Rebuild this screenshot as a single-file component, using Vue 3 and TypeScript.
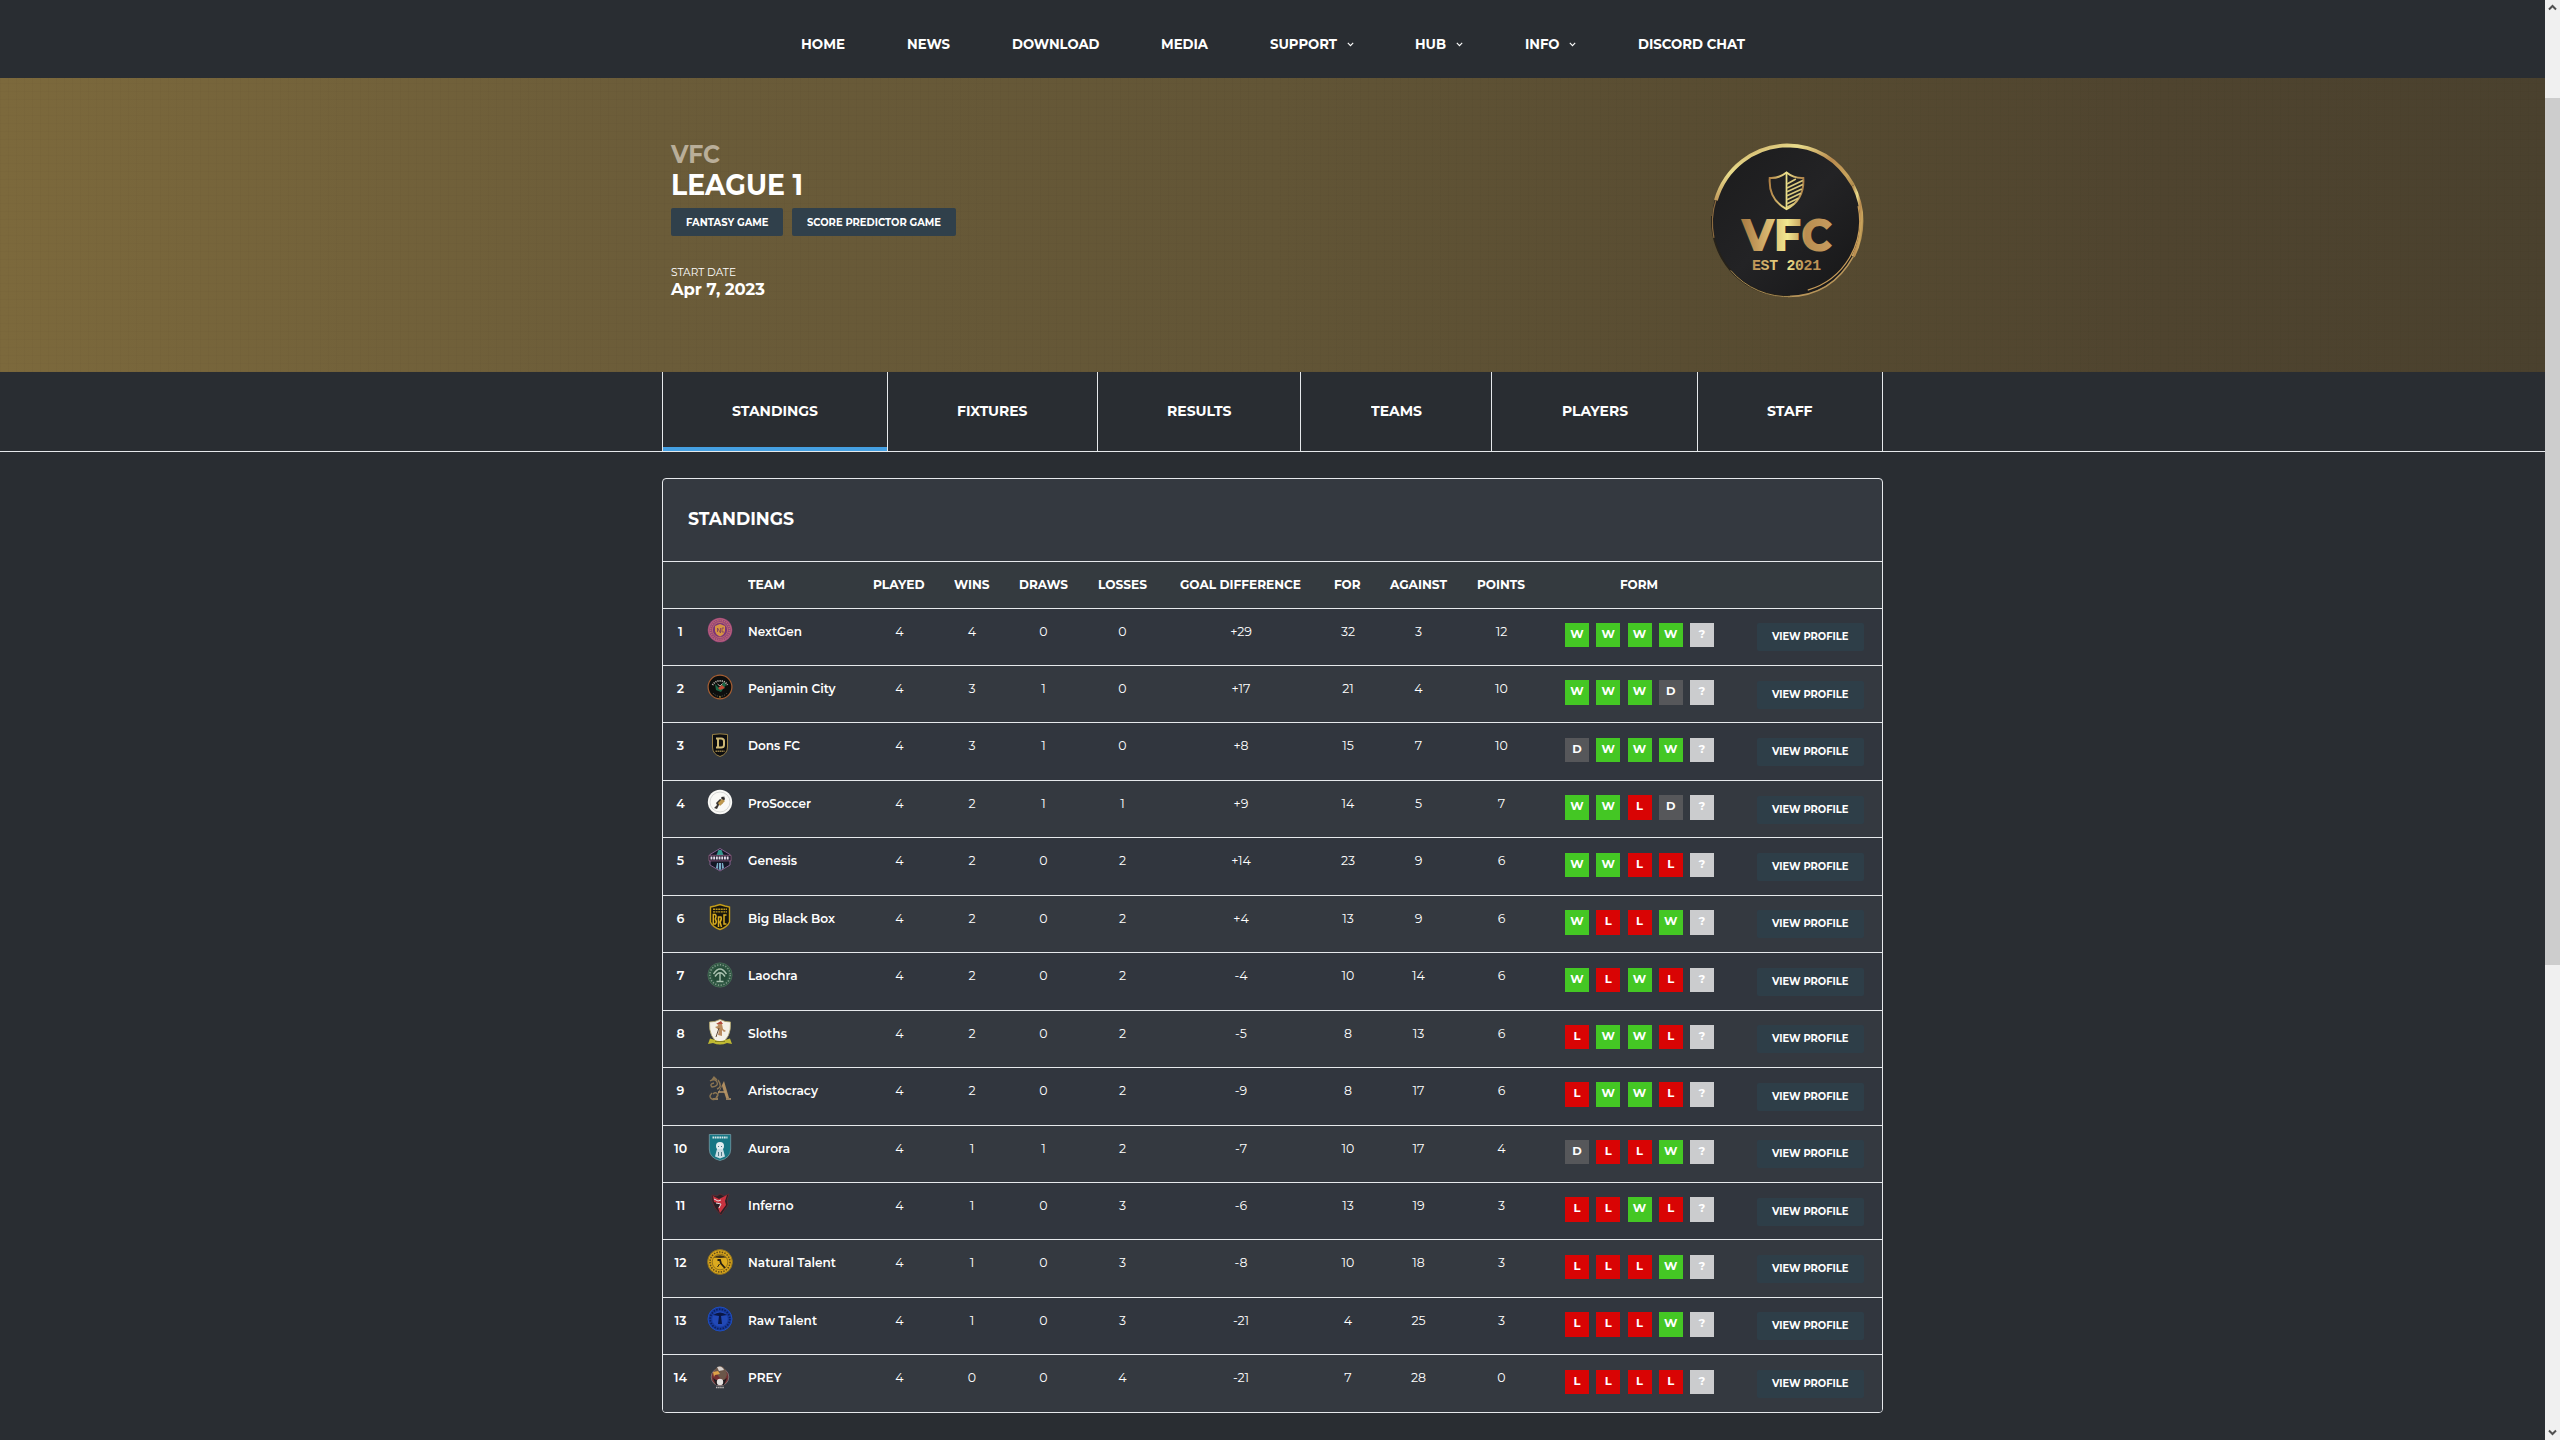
<script setup lang="ts">
interface MenuItem { label: string; width: number; gap: number; sub?: boolean }
interface Column { label: string; width: number }
interface Team { name: string; width: number; stats: (string | number)[]; form: string }

// Stretches a label horizontally so that it occupies the given width.
const vFit = {
  mounted(el: HTMLElement, binding: { value: number }) {
    const natural = el.getBoundingClientRect().width
    if (!natural || !binding.value) return
    el.style.width = `${binding.value}px`
    el.style.transform = `scaleX(${binding.value / natural})`
  },
}

const menu: MenuItem[] = [
  { label: 'HOME', width: 44, gap: 0 },
  { label: 'NEWS', width: 43, gap: 62 },
  { label: 'DOWNLOAD', width: 87.5, gap: 61.5 },
  { label: 'MEDIA', width: 47, gap: 62 },
  { label: 'SUPPORT', width: 67, gap: 61.5, sub: true },
  { label: 'HUB', width: 31, gap: 61.5, sub: true },
  { label: 'INFO', width: 34.5, gap: 61.5, sub: true },
  { label: 'DISCORD CHAT', width: 107, gap: 61.5 },
]

const tabs: Column[] = [
  { label: 'STANDINGS', width: 86 },
  { label: 'FIXTURES', width: 70.5 },
  { label: 'RESULTS', width: 64.5 },
  { label: 'TEAMS', width: 51 },
  { label: 'PLAYERS', width: 66 },
  { label: 'STAFF', width: 45.5 },
]

const columns: Column[] = [
  { label: 'PLAYED', width: 51.5 },
  { label: 'WINS', width: 35.5 },
  { label: 'DRAWS', width: 49 },
  { label: 'LOSSES', width: 49 },
  { label: 'GOAL DIFFERENCE', width: 121 },
  { label: 'FOR', width: 26.5 },
  { label: 'AGAINST', width: 57 },
  { label: 'POINTS', width: 48 },
  { label: 'FORM', width: 38 },
]

const teams: Team[] = [
  { name: 'NextGen', width: 54, stats: [4, 4, 0, 0, '+29', 32, 3, 12], form: 'WWWW?' },
  { name: 'Penjamin City', width: 87.5, stats: [4, 3, 1, 0, '+17', 21, 4, 10], form: 'WWWD?' },
  { name: 'Dons FC', width: 52, stats: [4, 3, 1, 0, '+8', 15, 7, 10], form: 'DWWW?' },
  { name: 'ProSoccer', width: 63, stats: [4, 2, 1, 1, '+9', 14, 5, 7], form: 'WWLD?' },
  { name: 'Genesis', width: 49, stats: [4, 2, 0, 2, '+14', 23, 9, 6], form: 'WWLL?' },
  { name: 'Big Black Box', width: 87, stats: [4, 2, 0, 2, '+4', 13, 9, 6], form: 'WLLW?' },
  { name: 'Laochra', width: 49.5, stats: [4, 2, 0, 2, '-4', 10, 14, 6], form: 'WLWL?' },
  { name: 'Sloths', width: 39, stats: [4, 2, 0, 2, '-5', 8, 13, 6], form: 'LWWL?' },
  { name: 'Aristocracy', width: 70, stats: [4, 2, 0, 2, '-9', 8, 17, 6], form: 'LWWL?' },
  { name: 'Aurora', width: 42, stats: [4, 1, 1, 2, '-7', 10, 17, 4], form: 'DLLW?' },
  { name: 'Inferno', width: 45.5, stats: [4, 1, 0, 3, '-6', 13, 19, 3], form: 'LLWL?' },
  { name: 'Natural Talent', width: 88, stats: [4, 1, 0, 3, '-8', 10, 18, 3], form: 'LLLW?' },
  { name: 'Raw Talent', width: 69, stats: [4, 1, 0, 3, '-21', 4, 25, 3], form: 'LLLW?' },
  { name: 'PREY', width: 33.5, stats: [4, 0, 0, 4, '-21', 7, 28, 0], form: 'LLLL?' },
]

const formClass: Record<string, string> = { W: 'win', D: 'draw', L: 'loss', '?': 'next' }
</script>

<template>
  <div class="window">
    <div class="page">
      <header class="header">
        <nav class="menu">
          <a v-for="m in menu" :key="m.label" class="menu-item" :style="{ marginLeft: m.gap + 'px' }">
            <span v-fit="m.width" class="fit">{{ m.label }}</span>
            <svg v-if="m.sub" class="caret" width="7" height="5" viewBox="0 0 7 5"><path d="M.8 .8 3.5 3.6 6.2 .8" fill="none" stroke="#fff" stroke-width="1.1" /></svg>
          </a>
        </nav>
      </header>

      <section class="banner">
        <div class="container banner-row">
          <div class="info">
            <div class="org"><span v-fit="49" class="fit">VFC</span></div>
            <div class="league"><span v-fit="132" class="fit">LEAGUE 1</span></div>
            <div class="actions">
              <a class="btn"><span v-fit="82.5" class="fit">FANTASY GAME</span></a>
              <a class="btn"><span v-fit="134" class="fit">SCORE PREDICTOR GAME</span></a>
            </div>
            <div class="date-label"><span v-fit="65" class="fit">START DATE</span></div>
            <div class="date"><span v-fit="94" class="fit">Apr 7, 2023</span></div>
          </div>
          <svg class="crest" width="158" height="158" viewBox="0 0 160 160">
            <defs>
              <linearGradient id="ring" x1="0" y1="0" x2="1" y2="1">
                <stop offset="0" stop-color="#b98f50" /><stop offset=".3" stop-color="#e9dc8c" /><stop offset=".55" stop-color="#b98a4e" /><stop offset=".75" stop-color="#c9a45c" /><stop offset="1" stop-color="#8f6d3c" />
              </linearGradient>
              <linearGradient id="gold" x1="0" x2="1">
                <stop offset="0" stop-color="#b08145" /><stop offset=".5" stop-color="#f0e48e" /><stop offset="1" stop-color="#ad8047" />
              </linearGradient>
              <linearGradient id="goldText" gradientUnits="userSpaceOnUse" x1="33" y1="0" x2="126" y2="0">
                <stop offset="0" stop-color="#a87a42" /><stop offset=".22" stop-color="#cda765" /><stop offset=".5" stop-color="#f2e890" /><stop offset=".7" stop-color="#b98d50" /><stop offset="1" stop-color="#c79d60" />
              </linearGradient>
              <linearGradient id="disc" x1="0" y1="0" x2="1" y2="1">
                <stop offset="0" stop-color="#1b1b1c" /><stop offset=".5" stop-color="#232325" /><stop offset="1" stop-color="#161617" />
              </linearGradient>
            </defs>
            <ellipse cx="79" cy="80.500" rx="76" ry="77" fill="url(#disc)" />
            <path d="M7 60A76 77 0 0 1 79 4.500Q123 5 146 45" fill="none" stroke="url(#ring)" stroke-width="3.800" />
            <path d="M146 45A77 78 0 0 1 146 117" fill="none" stroke="url(#ring)" stroke-width="3.400" />
            <path d="M146 117Q124 157 80 157.500" fill="none" stroke="#b8955a" stroke-width="1.600" />
            <path d="M151 66A73 73 0 0 1 100 151" fill="none" stroke="#c79c59" stroke-width="1.300" />
            <path d="M82 157A76 77 0 0 1 3 76" fill="none" stroke="#26221a" stroke-width="1.800" />
            <path d="M84 157.500A76 76 0 0 1 22 131" fill="none" stroke="#a98b52" stroke-width="1" />
            <path d="M7 60Q1 78 5 98" fill="none" stroke="#8b6a3f" stroke-width="1.200" />
            <path d="M78.500 32Q86 38 95.500 37.500Q97 59 78.500 69Q60 59 61.500 37.500Q71 38 78.500 32Z" fill="none" stroke="url(#gold)" stroke-width="2" />
            <path d="M78.500 32V69" stroke="#ebe08b" stroke-width="1.800" />
            <g stroke="#dccb7d" stroke-width="1.700">
              <path d="M79 43.500 88 38.500M79 47.500 95 40M79 51.500 95 44M79 55.500 94 48.500M79 59.500 93 53M79 63.500 90.500 58M79 67 86 63.500" />
            </g>
            <text x="33" y="111" class="crest-name" textLength="92" lengthAdjust="spacingAndGlyphs" fill="url(#goldText)">VFC</text>
            <text x="43.500" y="131" class="crest-est" textLength="70" lengthAdjust="spacing" fill="url(#goldText)">EST 2021</text>
          </svg>
        </div>
      </section>

      <div class="tabs">
        <div class="container tab-row">
          <a v-for="(t, i) in tabs" :key="t.label" class="tab" :class="{ active: i === 0 }"><span v-fit="t.width" class="fit">{{ t.label }}</span></a>
        </div>
      </div>

      <main class="container card">
        <h2 class="card-title"><span v-fit="106" class="fit">STANDINGS</span></h2>
        <div class="row head">
          <div></div><div></div>
          <div class="left"><span v-fit="37" class="fit">TEAM</span></div>
          <div v-for="c in columns" :key="c.label" class="th"><span v-fit="c.width" class="fit">{{ c.label }}</span></div>
          <div></div>
        </div>
        <div v-for="(t, i) in teams" :key="t.name" class="row team" :class="{ even: i % 2 === 1 }">
          <div class="rank">{{ i + 1 }}</div>
          <div class="logo">
            <svg width="26" height="28" viewBox="0 0 26 28">
              <g v-if="i === 0">
                <circle cx="13" cy="14" r="12.300" fill="#93427a" /><circle cx="13" cy="14" r="11.300" fill="none" stroke="#c76f78" stroke-width=".8" />
                <circle cx="13" cy="14" r="9.500" fill="none" stroke="#bd6a70" stroke-width="1.600" stroke-dasharray="1.200 1" /><circle cx="13" cy="14" r="7.600" fill="#7b3478" stroke="#ca7b68" stroke-width=".7" />
                <path d="M8 10 13 8l5 2v5q-1 4-5 5.500Q9 19 8 15Z" fill="#d69444" /><path d="M10.500 16v-4l3 5v-5M17 12h-2v4h2" fill="none" stroke="#7b3a5d" stroke-width=".8" />
              </g>
              <g v-else-if="i === 1">
                <circle cx="13" cy="14" r="11.900" fill="#0d0e0d" stroke="#a65f33" stroke-width="1.200" /><path d="M5.500 12A8.800 8.800 0 0 1 20.500 12" fill="none" stroke="#b9b5ac" stroke-width="1.800" stroke-dasharray="1.200 .9" /><path d="M6 20A9 9 0 0 0 20 20" fill="none" stroke="#7a7a72" stroke-width=".8" stroke-dasharray="1 1.400" />
                <path d="M8 11 12 15 17 9 19 12 14 19 9 17Z" fill="#1b6847" /><path d="M11 15 15 12l3 3-5 2Z" fill="#c44835" /><path d="M10.500 11l2.500 2 2.500-2.500" stroke="#d9d6c8" stroke-width=".8" fill="none" /><circle cx="13" cy="24" r=".8" fill="#d7a83d" />
              </g>
              <g v-else-if="i === 2">
                <path d="M5.500 3.500Q13 2.200 20.500 3.500V16q0 7-7.500 9.500Q5.500 23 5.500 16Z" fill="#0c0d0f" stroke="#9a8246" stroke-width="1" />
                <path d="M9 7.500h5q3 0 3 2.500v4q0 2.500-3 2.500h-5M11 7.500v9" fill="none" stroke="#cdb875" stroke-width="2" /><path d="M8.500 20.300h9" stroke="#a58c4c" stroke-width="1.500" stroke-dasharray="1.400 .6" />
              </g>
              <g v-else-if="i === 3">
                <circle cx="13" cy="14" r="12.200" fill="#f9f9f6" /><circle cx="13" cy="14" r="10" fill="none" stroke="#c8cac9" stroke-width=".7" />
                <path d="M7 20 10 17 9 15 13 11 15 12 17 8 18 11 15 16 12 17 10 21Z" fill="#3a3633" /><path d="M11 15 15 11 18 13 13 18Z" fill="#bd974c" /><circle cx="15.500" cy="10" r="1.300" fill="#2c2a2a" />
              </g>
              <g v-else-if="i === 4">
                <path d="M13 2.500 23 8.500V19L13 25 3 19V8.500Z" fill="#141726" stroke="#84618f" stroke-width="1" />
                <path d="M9.500 9 11.500 4h3l2 5Z" fill="#32988e" /><path d="M2 9.300h22v5.600h-22Z" fill="#171426" stroke="#b9769e" stroke-width=".6" />
                <path d="M3.500 12.100h19" stroke="#e5ddec" stroke-width="3" stroke-dasharray="1.900 .8" /><path d="M9 22l1-5h6l1 5-4 2Z" fill="#7aaec6" /><path d="M11.500 17v6M14.500 17v6" stroke="#252747" />
              </g>
              <g v-else-if="i === 5">
                <path d="M3.500 4 8 3l5-1.500L18 3l4.500 1v15q-2 5-9.500 7.500Q5.500 24 3.500 19Z" fill="#17150c" stroke="#c49d19" stroke-width="1.400" />
                <path d="M6 6.200h14M6 8.900h14" stroke="#bd981c" stroke-width="1.400" stroke-dasharray="2 .6" /><path d="M6.300 21v-9.500h2q1.500 1 0 4.500 2 3 0 5ZM11.500 24v-10h2.500q1 2-1 5l1.500 5M19.500 12H17v9h2.500" fill="none" stroke="#d8ac20" stroke-width="1.500" />
              </g>
              <g v-else-if="i === 6">
                <circle cx="13" cy="14" r="12.200" fill="#2d5641" stroke="#53735f" stroke-width=".6" /><circle cx="13" cy="14" r="10.200" fill="none" stroke="#82998a" stroke-width="1.500" stroke-dasharray="1.300 1.500" />
                <circle cx="13" cy="14" r="8" fill="#254b38" /><path d="M13 20v-8M6.500 13Q13 3 19.500 13M8 15.500Q13 8 18 15.500M9.500 20.500h7" fill="none" stroke="#a9c1af" stroke-width="1.400" />
              </g>
              <g v-else-if="i === 7">
                <path d="M2.500 4Q8 4 13 1.500 18 4 23.500 4q1 16-10.500 22Q1.500 20 2.500 4Z" fill="#f4f1e7" stroke="#b1a66b" stroke-width=".8" />
                <path d="M10 5l5 1 1 5 3 2-2 1-2-2 0 6-4-1 1-5-4-3 3-1Z" fill="#b98c5f" /><path d="M9 6h7l-2-3Z" fill="#b34b3d" /><path d="M12 10l-3 9" stroke="#5f4a3a" />
                <path d="M1 26 3 20.500 8 22q5 2 10 0l5-1.500 2 5.500-5-1q-7 3-14 0Z" fill="#c0ba32" /><path d="M8 23.500h10" stroke="#746f20" stroke-width=".8" />
              </g>
              <g v-else-if="i === 8">
                <path d="M8 24 17 6 22 23H19L15 11 9 24Z" fill="#ae8d60" /><path d="M11 17h8M19 24h5M6 24h5" stroke="#b7966a" stroke-width="1.300" />
                <path d="M3 6Q8 3 10 7T5 12Q2 9 7 8M5 18Q1 22 5 24t6-4q-2-4-5-1M5 5l2-3 3 3M11 5q5 7-1 9" fill="none" stroke="#8b7552" stroke-width="1.400" />
              </g>
              <g v-else-if="i === 9">
                <path d="M2.300 1.500h21.400V16q0 9-10.700 11.500Q2.300 25 2.300 16Z" fill="#167684" stroke="#739ba4" stroke-width=".8" /><path d="M5.500 4.500h15" stroke="#d4e5e6" stroke-width="1.800" stroke-dasharray="1.700 .6" />
                <circle cx="13" cy="13" r="4" fill="#e1ecef" /><path d="M8 23.500 10 16h6l2 7.500-5 2Z" fill="#cadee5" /><path d="M11 13.500h1M14 13.500h1M11.500 19v4M14.500 19v4" stroke="#507989" />
              </g>
              <g v-else-if="i === 10">
                <path d="M5 5 10 6 13 4 17 6 22 4 20 10 21 15 14 25 8 18 5 11Z" fill="#292025" stroke="#6d2930" stroke-width=".7" /><path d="M6 6l6 3 8-4-2 6 1 4-6 8-2-5 3-4-7-2Z" fill="#c9323f" /><path d="M7 9l4 2 3-1M9 13l5 1-2 4" fill="none" stroke="#e4dde0" stroke-width="1" />
              </g>
              <g v-else-if="i === 11">
                <circle cx="13" cy="14" r="12.400" fill="#d6a21a" stroke="#8f7320" /><circle cx="13" cy="14" r="10" fill="none" stroke="#5b4819" stroke-width="1.500" stroke-dasharray="1.400 1.300" /><circle cx="13" cy="14" r="7.800" fill="#dcaa1f" stroke="#6c541a" stroke-width=".6" />
                <path d="M6.500 9.500q6.500-4.500 13 0l-6.500 .5Z" fill="#40341a" /><path d="M10.500 12l2.500 0 1 3.500 4 4.500" fill="none" stroke="#221d14" stroke-width="1.800" /><path d="M12.500 16l-2 3" stroke="#221d14" />
              </g>
              <g v-else-if="i === 12">
                <circle cx="13" cy="14" r="12" fill="#173a9d" stroke="#1f4ebd" /><circle cx="13" cy="14" r="9.800" fill="none" stroke="#0c205f" stroke-width="1.800" stroke-dasharray="1.500 1.300" /><circle cx="13" cy="14" r="7.800" fill="#2148b6" />
                <path d="M6 10q7-5 14 0l-6 1 1 8h-4l1-8Z" fill="#0a1745" />
              </g>
              <g v-else>
                <circle cx="13" cy="14" r="8.800" fill="#722f32" stroke="#908787" stroke-width=".7" /><path d="M7 9Q9 3 14 3q5 2 6 9l-3 6-5-4-2-3Z" fill="#6b5649" /><path d="M10 4q5-2 7 3l-5 1Z" fill="#d5cfcb" /><path d="M6 9l5-1 2 3-5 1-1 2Z" fill="#dda249" />
                <path d="M6 15l3 7h8l3-7-3 2H9Z" fill="#201c20" /><circle cx="13" cy="19" r="3.200" fill="#e4e1df" /><path d="M9 24.500h8" stroke="#c0b9b6" stroke-width="1.500" stroke-dasharray="1.500 .6" />
              </g>
            </svg>
          </div>
          <div class="left name"><span v-fit="t.width" class="fit">{{ t.name }}</span></div>
          <div v-for="(s, k) in t.stats" :key="k" class="stat">{{ s }}</div>
          <div class="form"><span v-for="(f, k) in t.form" :key="k" class="result" :class="formClass[f]">{{ f }}</span></div>
          <div class="profile"><a class="view"><span v-fit="76.5" class="fit">VIEW PROFILE</span></a></div>
        </div>
      </main>
    </div>

    <aside class="scrollbar">
      <svg width="15" height="15" viewBox="0 0 15 15"><path d="M4 9.500 7.500 6 11 9.500" fill="none" stroke="#505050" stroke-width="2" /></svg>
      <div class="track"><div class="thumb"></div></div>
      <svg width="15" height="15" viewBox="0 0 15 15"><path d="M4 5.500 7.500 9 11 5.500" fill="none" stroke="#505050" stroke-width="2" /></svg>
    </aside>
  </div>
</template>

<style>
body { background: #292d32; overflow: hidden; }
</style>

<style scoped>
.window { display: flex; width: 2560px; height: 1440px; overflow: hidden; font-family: Montserrat, Inter, sans-serif; color: #fff; background: #292d32; }
.window * { box-sizing: border-box; }
.page { width: 2545px; }
.fit { display: inline-block; white-space: nowrap; transform-origin: 0 50%; }
.container { width: 1221px; margin: 0 auto; }
.header { height: 78px; padding-top: 34px; }
.menu { display: flex; margin-left: 801px; font-size: 13.500px; font-weight: 700; line-height: 21px; }
.menu-item { display: flex; align-items: center; }
.caret { margin: 0 0 0 10px; }

.banner { height: 294px; background: repeating-linear-gradient(90deg, rgba(0, 0, 0, .018) 0 1px, transparent 1px 8px), repeating-linear-gradient(0deg, rgba(0, 0, 0, .018) 0 1px, transparent 1px 8px), linear-gradient(90deg, #7c693c 0, #6b5c39 26%, #625536 50%, #574b31 70%, #4f442f 85%, #4a412e 100%); }
.banner-row { display: flex; justify-content: space-between; padding: 0 16px 0 9px; }
.info { padding-top: 62px; }
.org { font-size: 24.500px; line-height: 29px; font-weight: 700; color: #b9ae99; }
.league { font-size: 28.500px; line-height: 31px; font-weight: 700; }
.actions { display: flex; gap: 9px; margin-top: 8px; }
.btn { height: 28px; padding: 0 15px; line-height: 29px; font-size: 11px; font-weight: 700; background: #30404b; border-radius: 2px; }
.btn:first-child { padding-right: 14px; }
.date-label { margin-top: 28px; font-size: 11.500px; line-height: 16px; }
.date { font-size: 17px; line-height: 19px; font-weight: 700; }
.crest { margin-top: 63px; }
.crest-name { font: 800 46px Montserrat, Inter, sans-serif; }
.crest-est { font: 700 15px "Liberation Mono", monospace; }

.tabs { height: 80px; border-bottom: 1px solid #e6e9ec; }
.tab-row { display: grid; grid-template-columns: 225px 210px 203px 191px 206px 185px; height: 79px; border-left: 1px solid #e6e9ec; }
.tab { display: flex; justify-content: center; border-right: 1px solid #e6e9ec; font-size: 14.500px; line-height: 78px; font-weight: 700; }
.tab.active { box-shadow: inset 0 -4px #45a0e2; }

.card { margin-top: 26px; height: 935px; border: 1px solid #e6e9ec; border-radius: 4px; background: #343940; overflow: hidden; }
.card-title { margin: 0; height: 82px; padding-left: 25px; font-size: 17.500px; line-height: 80px; font-weight: 700; }
.row { display: grid; grid-template-columns: 35px 43px 122px 73px 72px 71px 87px 150px 64px 77px 89px 187px 149px; border-top: 1px solid #e6e9ec; text-align: center; }
.row .left { text-align: left; padding-left: 6.500px; }
.row .th { padding-right: 1px; }
.head { height: 46.600px; line-height: 46px; font-size: 12.500px; font-weight: 700; background: #343a3f; }
.team { height: 57.440px; background: #31363e; font-size: 12.500px; line-height: 46.400px; }
.team.even { background: #343940; }
.rank, .name { font-weight: 600; }
.logo { padding-top: 7.400px; line-height: 0; }
.form { display: flex; gap: 7.250px; padding: 14.400px 0 0 19px; }
.result { width: 24px; height: 24.400px; font-size: 11.500px; line-height: 23px; font-weight: 700; }
.win { background: #44c724; }
.draw { background: #56575a; }
.loss { background: #d90404; }
.next { background: #cbccce; }
.profile { padding: 14.600px 0 0 24px; text-align: left; }
.view { display: block; width: 107px; height: 28px; padding-left: 15px; font-size: 11px; line-height: 27.200px; font-weight: 700; background: #2e3e48; border-radius: 2px; }

.scrollbar { display: flex; flex-direction: column; width: 15px; height: 1440px; background: #f0f0f0; }
.track { flex: 1; padding-top: 83px; }
.thumb { height: 867px; background: #cdcdcd; }
</style>
